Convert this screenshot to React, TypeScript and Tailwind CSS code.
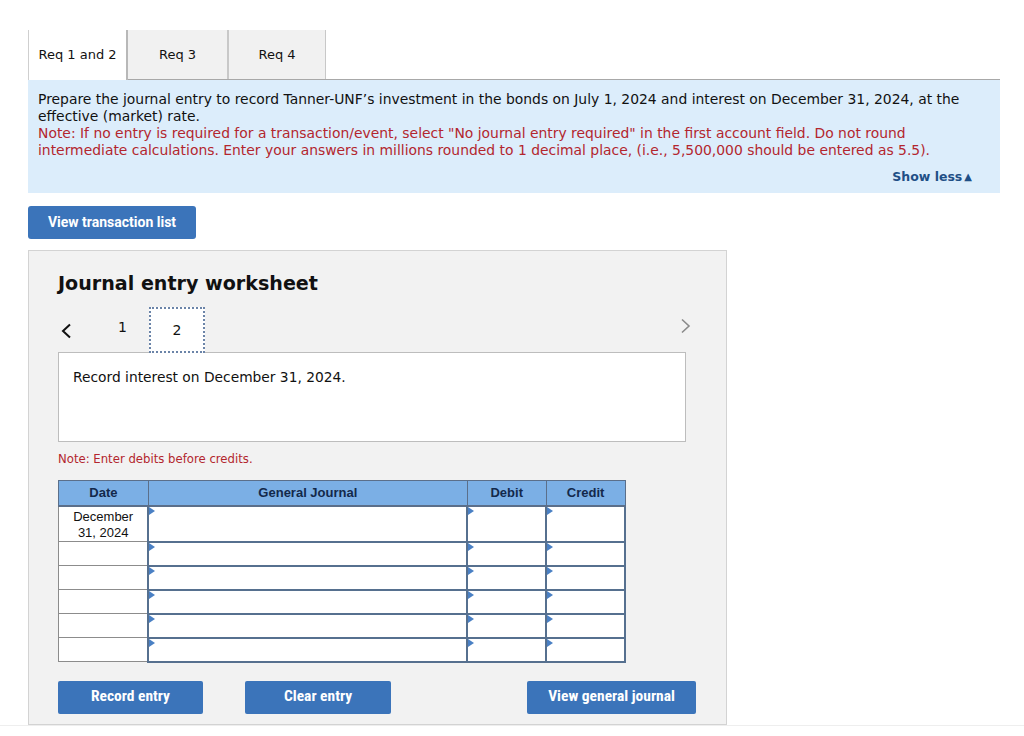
import React from "react";

const verdana = { fontFamily: '"DejaVu Sans", Verdana, sans-serif' };

function Tri() {
  return (
    <span className="absolute left-0 top-0 h-0 w-0 border-y-[4px] border-l-[6px] border-y-transparent border-l-[#4a80c4]" />
  );
}

function InputCell({ w }: { w: string }) {
  return (
    <td className={`relative border-2 border-[#56708f] bg-white p-0 ${w}`}>
      <Tri />
    </td>
  );
}

export default function App() {
  const rows = [0, 1, 2, 3, 4, 5];

  return (
    <div className="min-h-[736px] bg-white pt-[30px]" style={verdana}>
      <div className="ml-[28px] w-[972px]">
        {/* tabs */}
        <div className="flex h-[50px] border-b border-[#a8a8a8] text-[13px] text-[#111]">
          <div className="flex w-[100px] items-center justify-center border-l border-r-2 border-[#cfcfcf] border-r-[#b8b8b8] bg-white -mb-px">
            Req 1 and 2
          </div>
          <div className="flex w-[101px] items-center justify-center border-r-2 border-[#c8c8c8] bg-[#f1f1f1]">
            Req 3
          </div>
          <div className="flex w-[97px] items-center justify-center border-r border-[#c8c8c8] bg-[#f1f1f1]">
            Req 4
          </div>
        </div>

        {/* instructions */}
        <div className="bg-[#dcedfb] px-[10px] pt-[11px] pb-[8px] text-[13.9px] leading-[17px]">
          <p className="text-[#111]">
            <span className="block whitespace-nowrap">
              Prepare the journal entry to record Tanner-UNF’s investment in the bonds on July 1, 2024 and interest on December 31, 2024, at the
            </span>
            <span className="block whitespace-nowrap">effective (market) rate.</span>
          </p>
          <p className="text-[#b3262e]">
            <span className="block whitespace-nowrap">
              Note: If no entry is required for a transaction/event, select "No journal entry required" in the first account field. Do not round
            </span>
            <span className="block whitespace-nowrap">
              intermediate calculations. Enter your answers in millions rounded to 1 decimal place, (i.e., 5,500,000 should be entered as 5.5).
            </span>
          </p>
          <div className="mt-[9px] flex justify-end pr-[18px]">
            <span className="flex items-center gap-[2px] text-[12.5px] font-bold text-[#1f4f86]">
              Show less
              <span className="text-[10px]">▲</span>
            </span>
          </div>
        </div>
      </div>

      {/* view transaction list */}
      <div className="ml-[28px] mt-[13px]">
        <button
          className="h-[33px] w-[168px] rounded-[3px] bg-[#3b74ba] text-[14px] font-bold text-white"
          style={{ fontFamily: "Roboto, sans-serif" }}
        >
          View transaction list
        </button>
      </div>

      {/* worksheet */}
      <div className="ml-[28px] mt-[11px] w-[699px] border border-[#d3d3d3] bg-[#f2f2f2] pl-[29px] pr-[40px] pt-[20px] pb-[10px]">
        <h2 className="text-[19.1px] font-bold leading-[26px] text-[#111]">Journal entry worksheet</h2>

        <div className="mt-[10px] flex items-end">
          <span className="mb-[13px] ml-[2px] w-[40px] text-[20px] leading-none text-[#111]">
            <svg width="12" height="16" viewBox="0 0 12 16">
              <path d="M10 1.5 L3 8 L10 14.5" fill="none" stroke="#111" strokeWidth="2" />
            </svg>
          </span>
          <span className="mb-[14px] w-[49px] pl-[18px] text-[14px] text-[#111]">1</span>
          <span className="-mb-px flex h-[46px] w-[56px] items-center justify-center border-2 border-dotted border-[#6b84a8] bg-white text-[14px] text-[#111]">
            2
          </span>
          <span className="ml-auto mb-[18px] mr-[-6px]">
            <svg width="12" height="16" viewBox="0 0 12 16">
              <path d="M2 1.5 L9 8 L2 14.5" fill="none" stroke="#8a8a8a" strokeWidth="1.6" />
            </svg>
          </span>
        </div>

        <div className="h-[90px] border border-[#bdbdbd] bg-white px-[14px] pt-[14px] text-[13.8px] text-[#111]">
          Record interest on December 31, 2024.
        </div>

        <p className="mt-[9px] text-[11.7px] text-[#b3262e]">Note: Enter debits before credits.</p>

        <table
          className="mt-[11px] w-[568px] border-collapse text-[13px] text-[#111]"
          style={{ fontFamily: '"Liberation Sans", Arial, sans-serif' }}
        >
          <thead>
            <tr className="h-[26px] bg-[#7bafe5] font-bold text-[#13294b]">
              <th className="w-[90px] border border-[#5b6f8a] border-b-2 font-bold">Date</th>
              <th className="w-[320px] border border-[#5b6f8a] border-b-2 font-bold">General Journal</th>
              <th className="w-[79px] border border-[#5b6f8a] border-b-2 font-bold">Debit</th>
              <th className="w-[79px] border border-[#5b6f8a] border-b-2 font-bold">Credit</th>
            </tr>
          </thead>
          <tbody>
            {rows.map((r) => (
              <tr key={r} className={r === 0 ? "h-[35px]" : "h-[24px]"}>
                <td className="border border-[#8c8c8c] bg-white p-0 text-center align-top leading-[16px]">
                  {r === 0 ? (
                    <div className="pt-[2px]">
                      December
                      <br />
                      31, 2024
                    </div>
                  ) : null}
                </td>
                <InputCell w="w-[320px]" />
                <InputCell w="w-[79px]" />
                <InputCell w="w-[79px]" />
              </tr>
            ))}
          </tbody>
        </table>

        <div
          className="mt-[18px] flex text-[15.5px] font-bold text-white"
          style={{ fontFamily: '"Liberation Sans Narrow", "Roboto Condensed", Roboto, sans-serif' }}
        >
          <button className="h-[33px] w-[145px] shrink-0 rounded-[2px] bg-[#3b74ba]">Record entry</button>
          <button className="ml-[42px] h-[33px] w-[146px] shrink-0 rounded-[2px] bg-[#3b74ba]">Clear entry</button>
          <button className="ml-[136px] h-[33px] w-[169px] shrink-0 rounded-[2px] bg-[#3b74ba]">
            View general journal
          </button>
        </div>
      </div>
      <div className="h-px bg-[#eeeeee]" />
    </div>
  );
}
